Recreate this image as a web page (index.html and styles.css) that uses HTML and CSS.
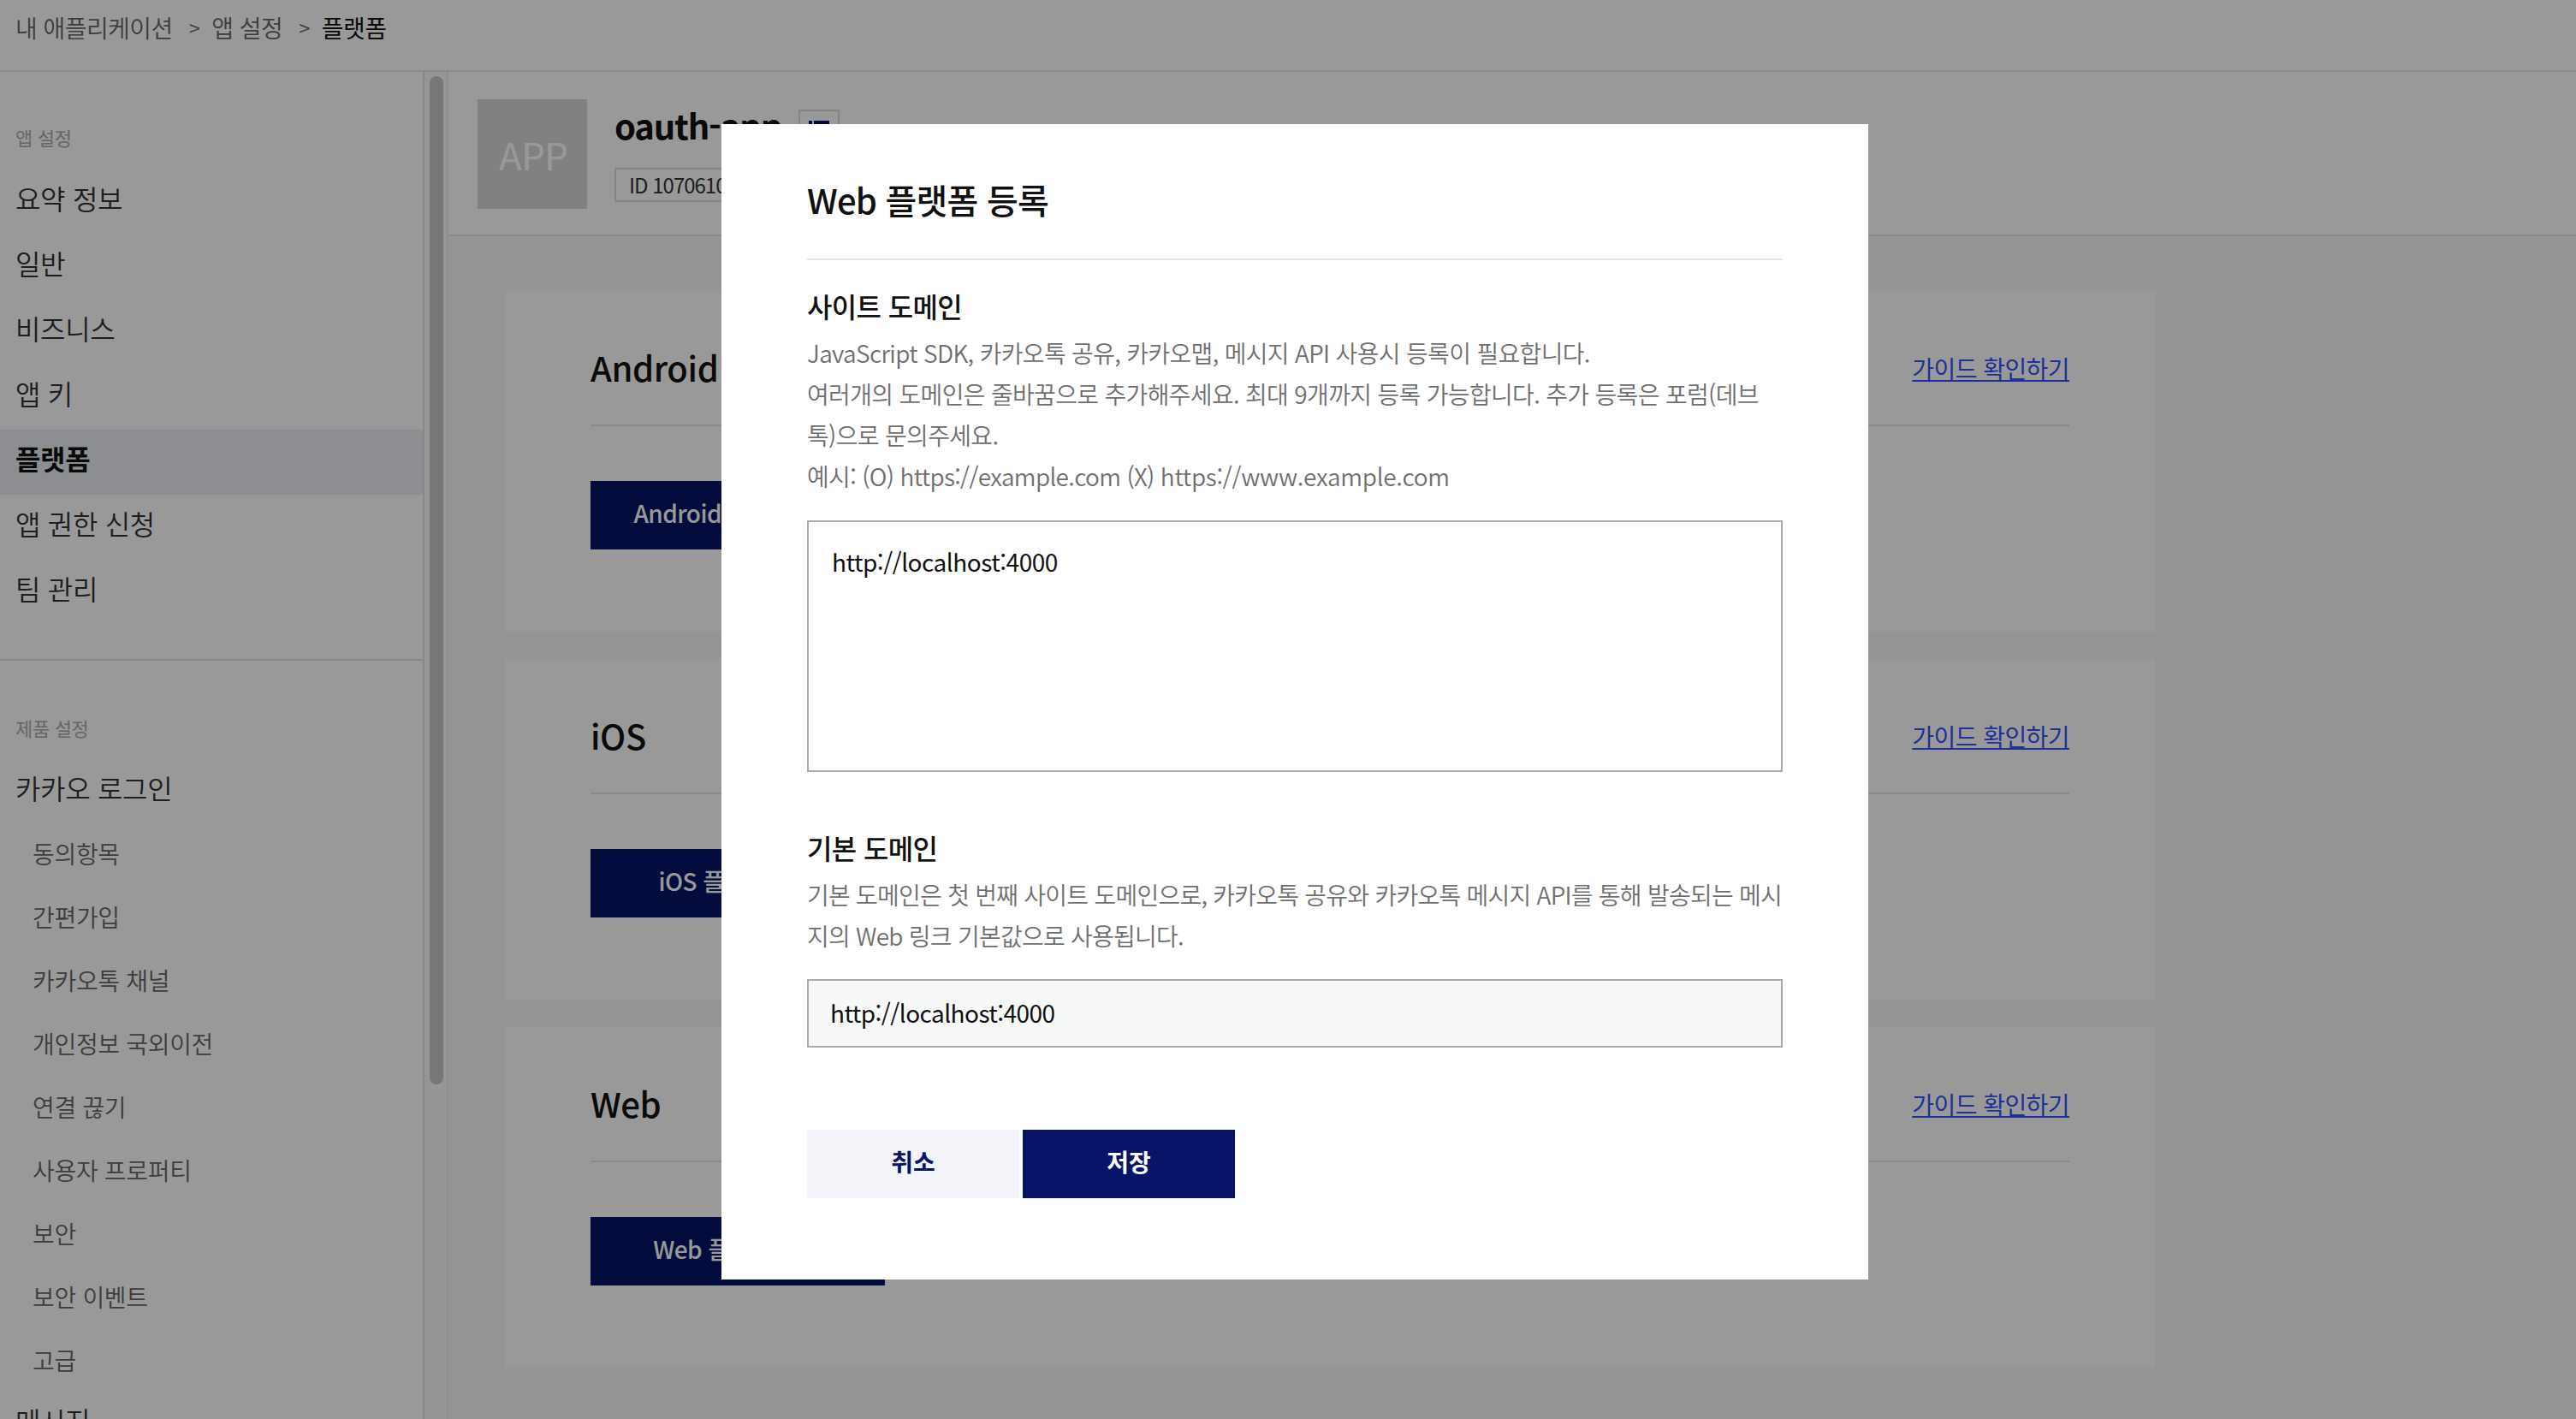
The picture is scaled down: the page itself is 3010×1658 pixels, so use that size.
FILE: index.html
```html
<!DOCTYPE html>
<html lang="ko">
<head>
    <meta charset="UTF-8" />
    <title>플랫폼</title>
    <link rel="stylesheet" href="styles.css">
</head>
<body>

    <div class="breadcrumb">
        <a href="#" class="crumb">내 애플리케이션</a>
        <span class="crumb-sep">&gt;</span>
        <a href="#" class="crumb">앱 설정</a>
        <span class="crumb-sep">&gt;</span>
        <span class="crumb current">플랫폼</span>
    </div>

    <div class="layout">
        <div class="sidebar">
            <div class="side-label first">앱 설정</div>
            <a href="#" class="side-item">요약 정보</a>
            <a href="#" class="side-item">일반</a>
            <a href="#" class="side-item">비즈니스</a>
            <a href="#" class="side-item">앱 키</a>
            <a href="#" class="side-item active">플랫폼</a>
            <a href="#" class="side-item">앱 권한 신청</a>
            <a href="#" class="side-item">팀 관리</a>
            <div class="side-divider"></div>
            <div class="side-label">제품 설정</div>
            <a href="#" class="side-item parent">카카오 로그인</a>
            <a href="#" class="side-sub">동의항목</a>
            <a href="#" class="side-sub">간편가입</a>
            <a href="#" class="side-sub">카카오톡 채널</a>
            <a href="#" class="side-sub">개인정보 국외이전</a>
            <a href="#" class="side-sub">연결 끊기</a>
            <a href="#" class="side-sub">사용자 프로퍼티</a>
            <a href="#" class="side-sub">보안</a>
            <a href="#" class="side-sub">보안 이벤트</a>
            <a href="#" class="side-sub">고급</a>
            <a href="#" class="side-item">메시지</a>
        </div>
        <div class="side-rail"><div class="side-thumb"></div></div>

        <div class="main">
            <div class="app-head">
                <div class="app-thumb">APP</div>
                <div class="app-info">
                    <div class="app-title">
                        <span class="app-name">oauth-app</span>
                        <span class="app-badge">
                            <svg width="26" height="26" viewBox="0 0 26 26"><path d="M0 0h4v4H0zM6 0h18v4H6zM0 8h4v4H0zM6 8h18v4H6z" fill="#071467"/></svg>
                        </span>
                    </div>
                    <div class="app-id">ID 1070610</div>
                </div>
            </div>

            <div class="cards">
                <div class="card">
                    <div class="card-head">
                        <h2>Android</h2>
                        <a href="#" class="guide-link">가이드 확인하기</a>
                    </div>
                    <button class="card-btn">Android 플랫폼 등록</button>
                </div>
                <div class="card">
                    <div class="card-head">
                        <h2>iOS</h2>
                        <a href="#" class="guide-link">가이드 확인하기</a>
                    </div>
                    <button class="card-btn">iOS 플랫폼 등록</button>
                </div>
                <div class="card">
                    <div class="card-head">
                        <h2>Web</h2>
                        <a href="#" class="guide-link">가이드 확인하기</a>
                    </div>
                    <button class="card-btn">Web 플랫폼 등록</button>
                </div>
            </div>
        </div>
    </div>

    <div class="overlay"></div>

    <div class="modal">
        <div class="modal-head">Web 플랫폼 등록</div>

        <div class="field-title first">사이트 도메인</div>
        <p class="field-desc">JavaScript SDK, 카카오톡 공유, 카카오맵, 메시지 API 사용시 등록이 필요합니다.<br>여러개의 도메인은 줄바꿈으로 추가해주세요. 최대 9개까지 등록 가능합니다. 추가 등록은 포럼(데브톡)으로 문의주세요.<br>예시: (O) https://example.com (X) <span class="url">https://www.example.com</span></p>
        <textarea class="domain-area" readonly>http://localhost:4000</textarea>

        <div class="field-title second">기본 도메인</div>
        <p class="field-desc tight">기본 도메인은 첫 번째 사이트 도메인으로, 카카오톡 공유와 카카오톡 메시지 API를 통해 발송되는 메시지의 Web 링크 기본값으로 사용됩니다.</p>
        <input class="domain-input" type="text" value="http://localhost:4000" readonly>

        <div class="modal-actions">
            <button class="btn-cancel">취소</button>
            <button class="btn-save">저장</button>
        </div>
    </div>

</body>
</html>
```

FILE: styles.css
```css
* {
    box-sizing: border-box;
}

html, body {
    height: 100%;
}

body {
    margin: 0;
    height: 1658px;
    overflow: hidden;
    background-color: #f9f9f9;
    color: #222;
    font-family: "Noto Sans CJK KR", "Noto Sans", sans-serif;
    display: flex;
    flex-direction: column;
}

a {
    color: inherit;
    text-decoration: none;
}

/* top breadcrumb */
.breadcrumb {
    height: 84px;
    flex: none;
    background-color: #fff;
    border-bottom: 2px solid #e5e5e5;
    padding: 12px 18px 0;
    display: flex;
    align-items: flex-start;
    font-size: 28px;
    line-height: 40px;
    letter-spacing: -0.56px;
    color: #666;
    font-weight: 350;
}

.crumb-sep {
    margin: 0 14px 0 19px;
    font-size: 24px;
}

.crumb.current {
    color: #111;
    font-weight: 400;
}

.layout {
    flex: 1;
    display: flex;
    min-height: 0;
}

/* left menu */
.sidebar {
    width: 496px;
    flex: none;
    background-color: #fff;
    border-right: 2px solid #e0e0e0;
    overflow: hidden;
    display: flex;
    flex-direction: column;
    letter-spacing: -0.02em;
}

.side-label {
    flex: none;
    padding-left: 18px;
    font-size: 22px;
    line-height: 32px;
    color: #aaa;
    margin: 62px 0 21px;
}

.side-label.first {
    margin-top: 60px;
    margin-bottom: 22px;
}

.side-item {
    flex: none;
    height: 76px;
    line-height: 66px;
    padding-left: 18px;
    font-size: 32px;
    font-weight: 350;
    color: #333;
}

.side-item.active {
    background-color: #eaedf3;
    font-weight: 700;
    color: #111;
}

.side-item.parent {
    margin-bottom: -3px;
}

.side-divider {
    flex: none;
    height: 2px;
    margin-top: 40px;
    background-color: #e0e0e0;
}

.side-sub {
    flex: none;
    height: 74px;
    line-height: 74px;
    padding-left: 38px;
    font-size: 28px;
    font-weight: 350;
    color: #666;
}

.side-rail {
    width: 28px;
    flex: none;
    background-color: #fafafa;
    border-right: 2px solid #eee;
    padding: 5px 0 0 6px;
}

.side-thumb {
    width: 16px;
    height: 1178px;
    border-radius: 8px;
    background-color: #c6c6c6;
}

/* right content */
.main {
    flex: 1;
    min-width: 0;
}

.app-head {
    height: 192px;
    background-color: #fff;
    border-bottom: 2px solid #e5e5e5;
    padding: 32px 0 0 34px;
    display: flex;
}

.app-thumb {
    width: 128px;
    height: 128px;
    padding-left: 2px;
    background-color: #d8d8d8;
    color: #fff;
    font-size: 44px;
    line-height: 128px;
    letter-spacing: -0.02em;
    text-align: center;
}

.app-info {
    margin-left: 32px;
}

.app-title {
    display: flex;
    align-items: flex-start;
    height: 80px;
}

.app-name {
    width: 190px;
    white-space: nowrap;
    font-size: 40px;
    line-height: 60px;
    font-weight: 700;
    letter-spacing: -1.2px;
    color: #111;
}

.app-badge {
    width: 48px;
    height: 48px;
    margin: 12px 0 0 25px;
    border: 2px solid #ddd;
    padding: 11px 0 0 10px;
}

.app-badge svg {
    display: block;
}

.app-id {
    width: 300px;
    height: 40px;
    border: 2px solid #ddd;
    padding-left: 15px;
    font-size: 24px;
    line-height: 36px;
    letter-spacing: -1px;
    color: #333;
}

.cards {
    padding: 64px 492px 0 66px;
    display: flex;
    flex-direction: column;
    gap: 32px;
}

.card {
    height: 398px;
    background-color: #fff;
    padding: 0 100px;
}

.card-head {
    height: 158px;
    border-bottom: 2px solid #e5e5e5;
    display: flex;
    justify-content: space-between;
    padding-top: 57px;
    margin-bottom: 64px;
}

.card-head h2 {
    margin: 0;
    font-size: 40px;
    line-height: 64px;
    font-weight: 500;
    letter-spacing: -0.4px;
    color: #111;
}

.guide-link {
    margin-top: 1px;
    font-size: 28px;
    line-height: 64px;
    letter-spacing: -0.56px;
    color: #3450fa;
    text-decoration: underline;
}

.card-btn {
    display: block;
    width: 344px;
    height: 80px;
    padding: 0 0 6px;
    border: none;
    background-color: #071467;
    color: #fff;
    font-family: inherit;
    font-size: 28px;
    font-weight: 500;
    letter-spacing: -0.56px;
}

/* dim layer and dialog */
.overlay {
    position: fixed;
    inset: 0;
    background-color: rgba(0, 0, 0, 0.4);
}

.modal {
    position: fixed;
    left: 843px;
    top: 145px;
    width: 1340px;
    height: 1350px;
    background-color: #fff;
    padding: 0 100px;
}

.modal-head {
    height: 159px;
    padding-top: 56px;
    border-bottom: 2px solid #e5e5e5;
    font-size: 40px;
    line-height: 64px;
    font-weight: 500;
    letter-spacing: -0.8px;
    color: #111;
}

.field-title {
    font-size: 32px;
    line-height: 48px;
    font-weight: 500;
    letter-spacing: -0.64px;
    color: #111;
}

.field-title.first {
    margin-top: 29px;
}

.field-title.second {
    margin-top: 64px;
}

.field-desc {
    margin: 7px 0 0;
    font-size: 28px;
    font-weight: 350;
    line-height: 48px;
    letter-spacing: -0.68px;
    color: #6f6f6f;
}

.field-desc.tight {
    letter-spacing: -0.76px;
}

.field-desc .url {
    letter-spacing: -0.3px;
}

.domain-area {
    display: block;
    width: 100%;
    height: 294px;
    margin-top: 28px;
    padding: 22px 27px;
    border: 2px solid #aaa;
    border-radius: 0;
    outline: none;
    resize: none;
    font-family: inherit;
    font-size: 28px;
    line-height: 48px;
    letter-spacing: -0.5px;
    color: #111;
}

.domain-input {
    display: block;
    width: 100%;
    height: 80px;
    margin-top: 27px;
    padding: 0 25px 2px;
    border: 2px solid #aaa;
    border-radius: 0;
    outline: none;
    background-color: #f7f8f8;
    font-family: inherit;
    font-size: 28px;
    letter-spacing: -0.56px;
    color: #111;
}

.modal-actions {
    margin-top: 96px;
    display: flex;
    gap: 4px;
}

.modal-actions button {
    width: 248px;
    height: 80px;
    padding: 0 0 6px;
    border: none;
    font-family: inherit;
    font-size: 28px;
    font-weight: 700;
}

.btn-cancel {
    background-color: #f2f4fa;
    color: #071467;
}

.btn-save {
    background-color: #071467;
    color: #fff;
}
```
